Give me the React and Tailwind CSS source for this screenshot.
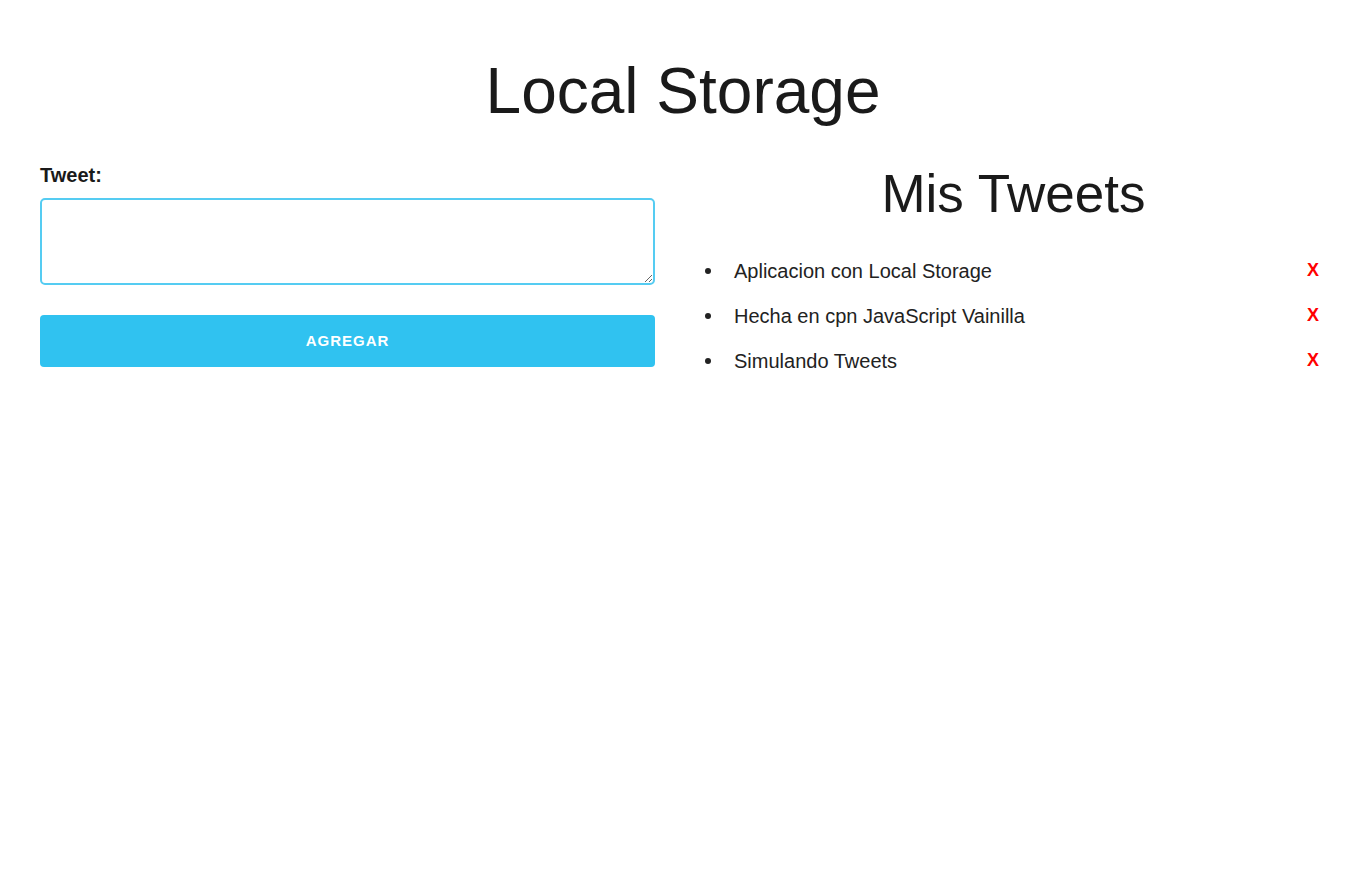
import React from 'react';

const tweets = [
  'Aplicacion con Local Storage',
  'Hecha en cpn JavaScript Vainilla',
  'Simulando Tweets',
];

export default function App() {
  return (
    <div className="min-h-[890px] bg-white text-[#222] font-['Liberation_Sans',Arial,sans-serif]">
      <h1 className="pt-[59px] text-center text-[64px] leading-none text-[#1a1a1a]">Local Storage</h1>

      <div className="flex items-start pl-[40px] pt-[42px]">
        {/* formulario */}
        <div className="w-[615px] shrink-0">
          <label className="block text-[20px] font-bold leading-none text-[#1a1a1a]">Tweet:</label>
          <textarea
            className="mt-[13px] block h-[87px] w-full rounded-[5px] border-2 border-[#55ccf2] outline-none"
          ></textarea>
          <button className="mt-[30px] h-[52px] w-full rounded-[4px] bg-[#30c2f0] text-[15px] font-bold tracking-[1px] text-white">
            AGREGAR
          </button>
        </div>

        {/* lista */}
        <div className="ml-[40px] flex-1 pr-[34px] pt-[2px]">
          <h2 className="text-center text-[53px] leading-none text-[#1a1a1a]">Mis Tweets</h2>
          <ul className="mt-[28px]">
            {tweets.map((t) => (
              <li key={t} className="flex h-[45px] items-center pr-[13px] text-[20px]">
                <span className="ml-[10px] h-[6px] w-[6px] rounded-full bg-[#222]"></span>
                <span className="ml-[23px] flex-1">{t}</span>
                <span className="text-[18px] font-bold text-[#ff0000]">X</span>
              </li>
            ))}
          </ul>
        </div>
      </div>
    </div>
  );
}
